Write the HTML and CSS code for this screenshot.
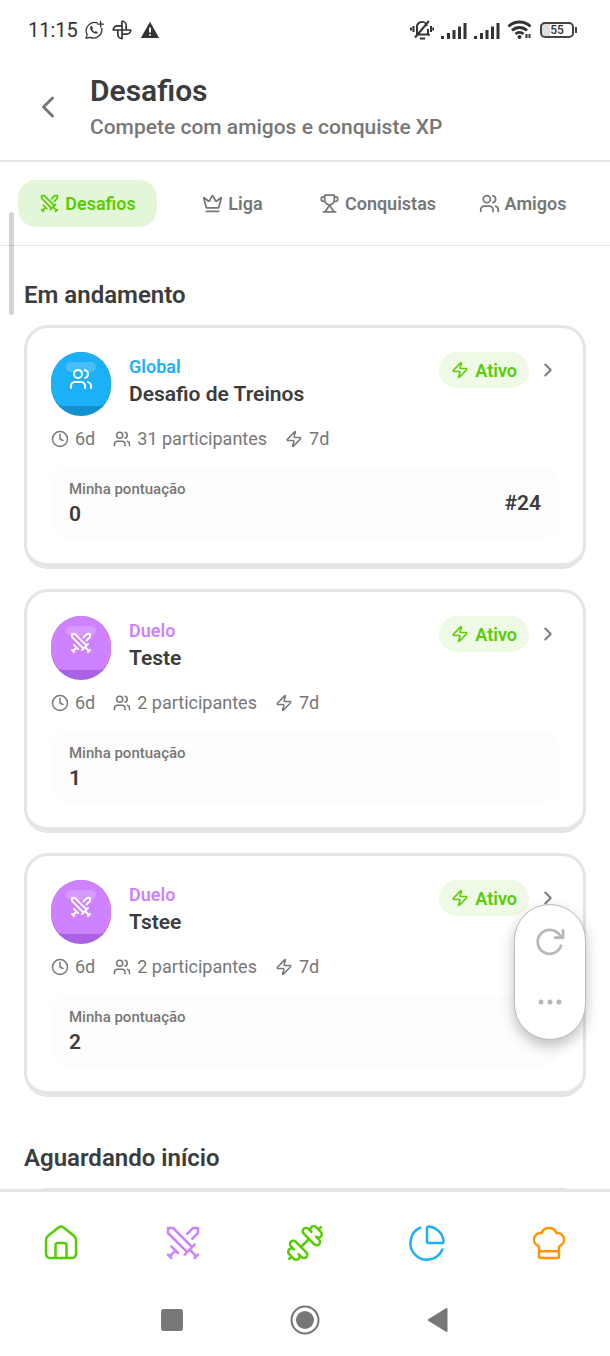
FILE: index.html
```
<!DOCTYPE html>
<html lang="pt-BR">
  <head>
    <meta charset="UTF-8" />
    <meta name="viewport" content="width=device-width, initial-scale=1.0" />
    <title>Desafios</title>
    <link rel="stylesheet" href="styles.css" />
  </head>
  <body>
    <!-- Icon sprite -->
    <svg class="sprite" aria-hidden="true">
      <symbol id="swords" viewBox="0 0 24 24">
        <path d="M14.5 17.5 3 6V3h3l11.5 11.5M13 19l6-6M16 16l4 4M19 21l2-2M14.5 6.5 18 3h3v3l-3.5 3.5M5 14l4 4M7 17l-3 3M3 19l2 2" />
      </symbol>
      <symbol id="users" viewBox="0 0 24 24">
        <circle cx="9" cy="7" r="4" />
        <path d="M16 21v-2a4 4 0 0 0-4-4H6a4 4 0 0 0-4 4v2M22 21v-2a4 4 0 0 0-3-3.87M16 3.13a4 4 0 0 1 0 7.75" />
      </symbol>
      <symbol id="crown" viewBox="0 0 24 24">
        <path d="M11.562 3.266a.5.5 0 0 1 .876 0L15.39 8.87a1 1 0 0 0 1.516.294L21.183 5.5a.5.5 0 0 1 .798.519l-2.834 10.246a1 1 0 0 1-.956.734H5.81a1 1 0 0 1-.957-.734L2.02 6.02a.5.5 0 0 1 .798-.519l4.276 3.664a1 1 0 0 0 1.516-.294zM5 21h14" />
      </symbol>
      <symbol id="trophy" viewBox="0 0 24 24">
        <path d="M6.500 2.500h11v6c0 2.500-2 4-5.500 5.500-3.500-1.500-5.500-3-5.500-5.500zM6.500 4.500H5a2.500 2.500 0 0 0 0 5h1.500M17.500 4.500H19a2.500 2.500 0 0 1 0 5h-1.500M12 14l-5 7.500M12 14l5 7.500M5 21.500h14" />
      </symbol>
      <symbol id="clock" viewBox="0 0 24 24">
        <circle cx="12" cy="12" r="10" />
        <path d="M12 6v6l4 2" />
      </symbol>
      <symbol id="zap" viewBox="0 0 24 24">
        <path d="M4 14a1 1 0 0 1-.78-1.63l9.9-10.2a.5.5 0 0 1 .86.46l-1.92 6.02A1 1 0 0 0 13 10h7a1 1 0 0 1 .78 1.63l-9.9 10.2a.5.5 0 0 1-.86-.46l1.92-6.02A1 1 0 0 0 11 14z" />
      </symbol>
      <symbol id="chevron-right" viewBox="0 0 24 24">
        <path d="m9 18 6-6-6-6" />
      </symbol>
      <symbol id="chevron-left" viewBox="0 0 24 24">
        <path d="m15 18-6-6 6-6" />
      </symbol>
    </svg>

    <div class="status-bar">
      <div class="status-left">
        <span class="time">11:15</span>
        <svg class="icon status-icon" viewBox="0 0 24 24">
          <path d="M16 3.500a10 10 0 0 0-12.200 14L2.500 22l4.800-1.200A10 10 0 0 0 21.300 10M20 1.500v7M16.500 5h7" />
          <path class="solid" d="M8 7.500c-2 2 1 7 4.500 8.500 2 1 4 .3 4-1.300l-2.300-1.500-1.200 1.200c-1.500-.7-2.500-1.700-3.200-3.200l1-1.200L9.500 7.300z" />
        </svg>
        <svg class="icon status-icon pinwheel" viewBox="0 0 24 24">
          <path d="M12 12V1.500a5 5 0 0 1 5 5V12M12 12h10.500a5 5 0 0 1-5 5H12M12 12v10.500a5 5 0 0 1-5-5V12M12 12H1.500a5 5 0 0 1 5-5H12" />
        </svg>
        <svg class="status-icon" viewBox="0 0 24 24">
          <path d="M12 2 23 21.500H1z" fill="#333" />
          <path d="M12 9v6M12 17v2" stroke="#fff" stroke-width="2.200" />
        </svg>
      </div>
      <div class="status-right">
        <svg class="bell" viewBox="0 0 24 22">
          <path d="M6 15.500h13M7 15V9a5 5 0 0 1 10-2M18 10v5l1.500 1.500M5 18.500 19 2M10 19.500h5M3.500 7v6M1 8.500v3M21 7v6M23.300 8.500v3" />
        </svg>
        <svg class="signal" viewBox="0 0 26 17">
          <path d="M1.500 14v3M7.500 11v6M13 8v9M18.500 4.500V17M24 1v16" />
        </svg>
        <svg class="signal" viewBox="0 0 26 17">
          <path d="M1.500 14v3M7.500 11v6M13 8v9M18.500 4.500V17M24 1v16" />
        </svg>
        <svg class="wifi" viewBox="0 0 26 20">
          <path d="M1.500 6.500a16 16 0 0 1 22 0M5 10.500a11 11 0 0 1 15 0M8.500 14a6 6 0 0 1 8 0" />
          <circle cx="12.500" cy="17" r="2" />
          <path class="arrows" d="M19.500 14v4M22.500 14v4" />
        </svg>
        <span class="battery">55</span>
      </div>
    </div>

    <header class="page-header">
      <button class="back" aria-label="Voltar">
        <svg class="icon"><use href="#chevron-left" /></svg>
      </button>
      <div>
        <h1>Desafios</h1>
        <p>Compete com amigos e conquiste XP</p>
      </div>
    </header>

    <div class="tabs">
      <button class="tab active">
        <svg class="icon"><use href="#swords" /></svg>Desafios
      </button>
      <button class="tab">
        <svg class="icon"><use href="#crown" /></svg>Liga
      </button>
      <button class="tab">
        <svg class="icon"><use href="#trophy" /></svg>Conquistas
      </button>
      <button class="tab">
        <svg class="icon"><use href="#users" /></svg>Amigos
      </button>
    </div>

    <main>
      <section>
        <h2>Em andamento</h2>

        <article class="card">
          <div class="card-top">
            <div class="avatar global">
              <div class="avatar-face">
                <svg class="icon"><use href="#users" /></svg>
              </div>
            </div>
            <div class="card-title">
              <span class="kind global-text">Global</span>
              <h3>Desafio de Treinos</h3>
            </div>
            <span class="badge">
              <svg class="icon"><use href="#zap" /></svg>Ativo
            </span>
            <a class="open" href="#" aria-label="Abrir Desafio de Treinos">
              <svg class="icon"><use href="#chevron-right" /></svg>
            </a>
          </div>
          <div class="meta">
            <span><svg class="icon"><use href="#clock" /></svg>6d</span>
            <span><svg class="icon"><use href="#users" /></svg>31 participantes</span>
            <span><svg class="icon"><use href="#zap" /></svg>7d</span>
          </div>
          <div class="score">
            <div>
              <p>Minha pontuação</p>
              <strong>0</strong>
            </div>
            <strong>#24</strong>
          </div>
        </article>

        <article class="card">
          <div class="card-top">
            <div class="avatar duel">
              <div class="avatar-face">
                <svg class="icon"><use href="#swords" /></svg>
              </div>
            </div>
            <div class="card-title">
              <span class="kind duel-text">Duelo</span>
              <h3>Teste</h3>
            </div>
            <span class="badge">
              <svg class="icon"><use href="#zap" /></svg>Ativo
            </span>
            <a class="open" href="#" aria-label="Abrir Teste">
              <svg class="icon"><use href="#chevron-right" /></svg>
            </a>
          </div>
          <div class="meta">
            <span><svg class="icon"><use href="#clock" /></svg>6d</span>
            <span><svg class="icon"><use href="#users" /></svg>2 participantes</span>
            <span><svg class="icon"><use href="#zap" /></svg>7d</span>
          </div>
          <div class="score">
            <div>
              <p>Minha pontuação</p>
              <strong>1</strong>
            </div>
          </div>
        </article>

        <article class="card">
          <div class="card-top">
            <div class="avatar duel">
              <div class="avatar-face">
                <svg class="icon"><use href="#swords" /></svg>
              </div>
            </div>
            <div class="card-title">
              <span class="kind duel-text">Duelo</span>
              <h3>Tstee</h3>
            </div>
            <span class="badge">
              <svg class="icon"><use href="#zap" /></svg>Ativo
            </span>
            <a class="open" href="#" aria-label="Abrir Tstee">
              <svg class="icon"><use href="#chevron-right" /></svg>
            </a>
          </div>
          <div class="meta">
            <span><svg class="icon"><use href="#clock" /></svg>6d</span>
            <span><svg class="icon"><use href="#users" /></svg>2 participantes</span>
            <span><svg class="icon"><use href="#zap" /></svg>7d</span>
          </div>
          <div class="score">
            <div>
              <p>Minha pontuação</p>
              <strong>2</strong>
            </div>
          </div>
        </article>
      </section>

      <section>
        <h2>Aguardando início</h2>
        <article class="card"></article>
      </section>
    </main>

    <!-- Bottom navigation -->
    <nav class="bottom-nav">
      <a class="green" href="#" aria-label="Início">
        <svg class="icon" viewBox="0 0 24 24">
          <path d="M3 10.200c0-1.200.4-1.900 1.300-2.600l6.200-4.900a2.400 2.400 0 0 1 3 0l6.200 4.900c.9.700 1.300 1.400 1.300 2.600V18.500a2.500 2.500 0 0 1-2.500 2.500h-13A2.500 2.500 0 0 1 3 18.500zM8.700 21v-7.500a1.500 1.500 0 0 1 1.500-1.500h3.600a1.500 1.500 0 0 1 1.500 1.500V21" />
        </svg>
      </a>
      <a class="purple" href="#" aria-label="Desafios">
        <svg class="icon"><use href="#swords" /></svg>
      </a>
      <a class="green" href="#" aria-label="Treinos">
        <svg class="icon" viewBox="0 0 24 24">
          <path d="M17.596 12.768a2 2 0 1 0 2.829-2.829l-1.768-1.767a2 2 0 0 0 2.828-2.829l-2.828-2.828a2 2 0 0 0-2.829 2.828l-1.767-1.768a2 2 0 1 0-2.829 2.829zM2.500 21.500l1.400-1.400M20.100 3.900l1.400-1.400M5.343 21.485a2 2 0 1 0 2.829-2.828l1.767 1.768a2 2 0 1 0 2.829-2.829l-6.364-6.364a2 2 0 1 0-2.829 2.829l1.768 1.767a2 2 0 0 0-2.828 2.829zM9.600 14.400l4.800-4.800" />
        </svg>
      </a>
      <a class="blue" href="#" aria-label="Estatísticas">
        <svg class="icon" viewBox="0 0 24 24">
          <path d="M21 12c.552 0 1.005-.449.95-.998a10 10 0 0 0-8.953-8.951c-.55-.055-.998.398-.998.95v8a1 1 0 0 0 1 1zM21.210 15.890A10 10 0 1 1 8 2.830" />
        </svg>
      </a>
      <a class="orange" href="#" aria-label="Receitas">
        <svg class="icon" viewBox="0 0 24 24">
          <path d="M17 21a1 1 0 0 0 1-1v-5.350c0-.457.316-.844.727-1.041a4 4 0 0 0-2.134-7.589 5 5 0 0 0-9.186 0 4 4 0 0 0-2.134 7.588c.411.198.727.585.727 1.041V20a1 1 0 0 0 1 1zM6 17h12" />
        </svg>
      </a>
    </nav>

    <!-- Android system buttons -->
    <div class="system-nav">
      <button aria-label="Recentes">
        <svg viewBox="0 0 32 32"><rect x="5" y="5" width="22" height="22" rx="3" /></svg>
      </button>
      <button aria-label="Tela inicial">
        <svg viewBox="0 0 32 32">
          <circle cx="16" cy="16" r="9" />
          <circle class="ring" cx="16" cy="16" r="13.500" />
        </svg>
      </button>
      <button aria-label="Voltar ao app anterior">
        <svg viewBox="0 0 32 32"><path d="M25.500 5v22q0 1.500-1.500.8L6.500 17q-1.200-1 0-2L24 4.200q1.500-.7 1.500.8z" /></svg>
      </button>
    </div>

    <div class="scroll-thumb"></div>

    <div class="floating">
      <button aria-label="Recarregar">
        <svg class="icon" viewBox="0 0 24 24">
          <path d="M20.500 14A9 9 0 1 1 19 6.500L21 8.500M21.800 2.500v6.200H15" />
        </svg>
      </button>
      <button aria-label="Mais opções">
        <svg viewBox="0 0 32 32">
          <circle cx="7" cy="16" r="2.500" />
          <circle cx="16" cy="16" r="2.500" />
          <circle cx="25" cy="16" r="2.500" />
        </svg>
      </button>
    </div>
  </body>
</html>
```
FILE: styles.css
```
* {
  margin: 0;
  padding: 0;
  box-sizing: border-box;
}

body {
  display: flex;
  flex-direction: column;
  height: 100vh;
  background-color: #fff;
  color: #3c3c3c;
  font-family: Roboto, "Liberation Sans", sans-serif;
  font-size: 18px;
  overflow: hidden;
}

button {
  background: none;
  border: none;
  color: inherit;
  font: inherit;
  cursor: pointer;
}

a {
  color: inherit;
  text-decoration: none;
}

svg {
  display: block;
  flex-shrink: 0;
}

.sprite {
  display: none;
}

.icon {
  fill: none;
  stroke: currentColor;
  stroke-width: 1.5;
  stroke-linecap: round;
  stroke-linejoin: round;
}

/* Status bar */
.status-bar {
  display: flex;
  flex-shrink: 0;
  align-items: center;
  justify-content: space-between;
  height: 60px;
  padding: 0 36px 0 28px;
  color: #333;
}

.status-left,
.status-right {
  display: flex;
  align-items: center;
}

.status-left {
  gap: 8px;
}

.time {
  margin-right: -2px;
  font-size: 20px;
}

.status-icon {
  width: 20px;
  height: 20px;
}

.status-icon .solid {
  fill: currentColor;
  stroke: none;
}

.pinwheel {
  stroke-width: 2;
}

.status-right {
  gap: 7px;
}

.bell,
.signal,
.wifi {
  fill: none;
  stroke: #333;
  stroke-width: 2;
}

.bell {
  width: 24px;
  height: 22px;
}

.signal {
  width: 26px;
  height: 17px;
  stroke-width: 3;
}

.wifi {
  width: 26px;
  height: 20px;
  stroke-width: 3;
}

.wifi circle {
  fill: #333;
  stroke: none;
}

.wifi .arrows {
  stroke-width: 2;
}

.battery {
  position: relative;
  width: 34px;
  height: 16px;
  border: 2px solid #444;
  border-radius: 5px;
  background: linear-gradient(to right, #ddd 8px, #fff 8px);
  font-size: 12px;
  font-weight: 500;
  line-height: 13px;
  text-align: center;
}

.battery::after {
  content: "";
  position: absolute;
  top: 3px;
  right: -5px;
  width: 2px;
  height: 6px;
  background-color: #444;
}

/* Header */
.page-header {
  display: flex;
  flex-shrink: 0;
  align-items: center;
  gap: 24px;
  padding: 13px 30px 19px;
  border-bottom: 2px solid #e5e5e5;
}

.back {
  color: #777;
}

.back .icon {
  width: 36px;
  height: 36px;
  stroke-width: 2;
}

h1 {
  font-size: 30px;
  font-weight: 600;
  line-height: 36px;
}

.page-header p {
  margin-top: 4px;
  color: #777;
  font-size: 21px;
  font-weight: 500;
  line-height: 28px;
}

/* Tabs */
.tabs {
  display: flex;
  flex-shrink: 0;
  gap: 6px;
  padding: 18px;
  border-bottom: 1px solid #e5e5e5;
}

.tab {
  display: flex;
  flex: 1;
  align-items: center;
  justify-content: center;
  gap: 5px;
  height: 47px;
  border-radius: 18px;
  color: #777;
  font-weight: 600;
}

.tab.active {
  background-color: #e4f6d8;
  color: #58cc02;
}

.tab .icon {
  width: 21px;
  height: 21px;
  stroke-width: 2;
}

/* Content */
main {
  flex: 1;
  min-height: 0;
  padding: 35px 24px 0;
  overflow-y: auto;
  scrollbar-width: none;
}

section {
  display: flex;
  flex-direction: column;
  gap: 20px;
  margin-bottom: 47px;
}

h2 {
  margin-bottom: -4px;
  font-size: 24px;
  font-weight: 600;
  line-height: 28px;
}

.card {
  min-height: 244px;
  padding: 24px;
  border: 3px solid #e5e5e5;
  border-bottom-width: 6px;
  border-radius: 24px;
}

.card-top {
  display: flex;
  align-items: flex-start;
}

.avatar {
  position: relative;
  flex-shrink: 0;
  width: 60px;
  height: 64px;
  border-radius: 30px;
  overflow: hidden;
}

.avatar-face {
  display: flex;
  align-items: center;
  justify-content: center;
  height: 54px;
  border-radius: 30px 30px 12px 12px / 30px 30px 24px 24px;
  color: #fff;
}

.avatar-face::before {
  content: "";
  position: absolute;
  top: 10px;
  left: 15px;
  width: 30px;
  height: 10px;
  border-radius: 5px;
  background-color: #ffffff33;
}

.avatar-face .icon {
  width: 24px;
  height: 24px;
  stroke-width: 2;
}

.global {
  background-color: #1590cf;
}

.global .avatar-face {
  background-color: #1cb0f6;
}

.duel {
  background-color: #a962e3;
}

.duel .avatar-face {
  background-color: #ce82ff;
}

.card-title {
  flex: 1;
  padding: 3px 0 0 18px;
}

.kind {
  display: block;
  font-weight: 600;
  line-height: 24px;
}

.global-text {
  color: #1cb0f6;
}

.duel-text {
  color: #ce82ff;
}

h3 {
  margin-top: 1px;
  font-size: 21px;
  font-weight: 600;
  line-height: 28px;
}

.badge {
  display: flex;
  align-items: center;
  gap: 6px;
  height: 36px;
  padding: 0 12px;
  border-radius: 18px;
  background-color: #eef9e6;
  color: #58cc02;
  font-weight: 600;
}

.badge .icon,
.meta .icon {
  width: 18px;
  height: 18px;
  stroke-width: 2;
}

.open {
  margin: 7px 0 0 8px;
  color: #777;
}

.open .icon {
  width: 22px;
  height: 22px;
  stroke-width: 2;
}

.meta {
  display: flex;
  gap: 18px;
  margin: 11px 0 16px;
  color: #777;
  line-height: 24px;
}

.meta span {
  display: flex;
  align-items: center;
  gap: 6px;
}

.score {
  display: flex;
  align-items: center;
  justify-content: space-between;
  padding: 11px 18px;
  border-radius: 18px;
  background-color: #fdfdfd;
}

.score p {
  color: #777;
  font-size: 15px;
  font-weight: 500;
  line-height: 22px;
}

.score strong {
  display: block;
  font-size: 21px;
  font-weight: 600;
  line-height: 28px;
}

/* Bottom navigation */
.bottom-nav {
  display: flex;
  flex-shrink: 0;
  align-items: center;
  height: 106px;
  padding-bottom: 2px;
  border-top: 3px solid #e5e5e5;
  background-color: #fff;
}

.bottom-nav a {
  display: flex;
  flex: 1;
  justify-content: center;
}

.bottom-nav .icon {
  width: 40px;
  height: 40px;
}

.green {
  color: #58cc02;
}

.purple {
  color: #ce82ff;
}

.blue {
  color: #1cb0f6;
}

.orange {
  color: #ff9600;
}

.system-nav {
  display: flex;
  flex-shrink: 0;
  height: 61px;
  padding: 0 105px 12px;
}

.system-nav button {
  display: flex;
  flex: 1;
  align-items: center;
  justify-content: center;
}

.system-nav svg {
  width: 32px;
  height: 32px;
  fill: #777;
}

.system-nav .ring {
  fill: none;
  stroke: #777;
  stroke-width: 2;
}

/* Overlays */
.scroll-thumb {
  position: absolute;
  top: 212px;
  left: 9px;
  width: 5px;
  height: 103px;
  border-radius: 3px;
  background-color: #0000002b;
}

.floating {
  position: absolute;
  right: 24px;
  bottom: 316px;
  display: flex;
  flex-direction: column;
  align-items: center;
  gap: 28px;
  padding: 21px 19px;
  border: 1px solid #bbb;
  border-radius: 36px;
  background-color: #fff;
  color: #b8b8b8;
  box-shadow: 0 6px 14px #00000040;
}

.floating svg {
  width: 32px;
  height: 32px;
}

.floating .icon {
  stroke-width: 2;
  stroke-linecap: butt;
  stroke-linejoin: miter;
}

.floating circle {
  fill: currentColor;
}
```
